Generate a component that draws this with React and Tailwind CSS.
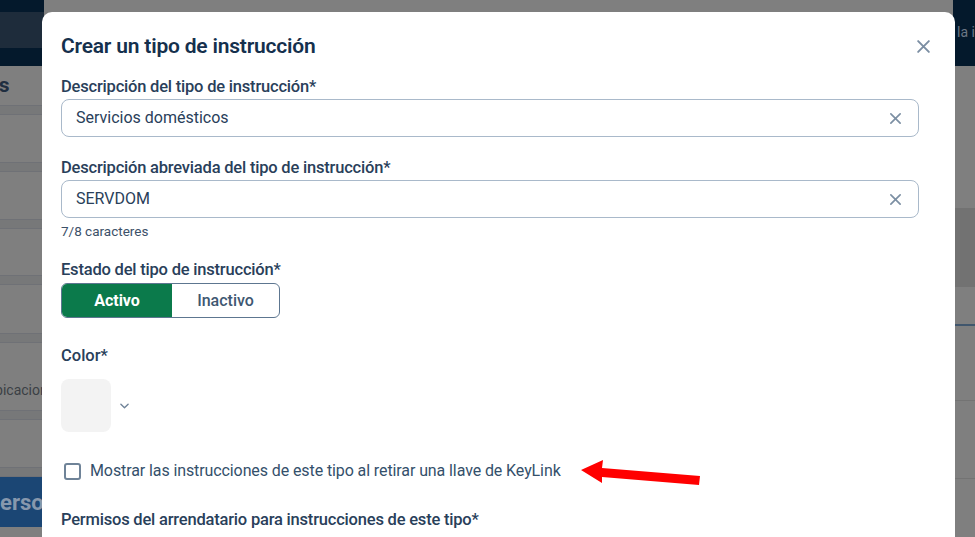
import React from 'react';

const font = { fontFamily: 'Roboto, "Liberation Sans", sans-serif' };

function XIcon({ className }) {
  return (
    <svg viewBox="0 0 14 14" className={className} fill="none" stroke="currentColor" strokeWidth="1.8" strokeLinecap="round">
      <path d="M2 2l10 10M12 2L2 12" />
    </svg>
  );
}

function Band() {
  return <div className="h-[10px] bg-[#777879] border-y border-[#6f7176]"></div>;
}

function TextField({ value }) {
  return (
    <div className="h-[38px] w-[858px] rounded-[8px] border-[1.5px] border-[#a9b9ca] flex items-center justify-between pl-[14px] pr-[16px]">
      <span className="text-[16px] text-[#29405a]">{value}</span>
      <XIcon className="w-[13px] h-[13px] text-[#7c8fa3]" />
    </div>
  );
}

export default function App() {
  return (
    <div className="relative w-[975px] h-[537px] overflow-hidden bg-[#7f7f7f]" style={font}>
      {/* page behind the dialog */}
      <div className="flex justify-between">
        <div className="w-[44px] flex flex-col overflow-hidden">
          <div className="h-[12px] bg-[#04192c]"></div>
          <div className="h-[36px] bg-[#1e2c3b]"></div>
          <div className="h-[18px] bg-[#04192c]"></div>
          <div className="h-[39px] flex items-center text-[21px] font-bold text-[#1f2e40] whitespace-nowrap ml-[-13px]">os</div>
          <Band />
          <div className="h-[47px]"></div>
          <Band />
          <div className="h-[47px]"></div>
          <Band />
          <div className="h-[46px]"></div>
          <Band />
          <div className="h-[48px]"></div>
          <Band />
          <div className="h-[67px] flex items-center text-[14px] text-[#3b3f45] whitespace-nowrap ml-[-14px] pt-[27px]">Ubicacion</div>
          <Band />
          <div className="h-[47px]"></div>
          <Band />
          <div className="h-[50px] bg-[#1b4674] flex items-center text-[22px] font-bold text-[#8798ad] whitespace-nowrap ml-[-14px]">Person</div>
        </div>
        <div className="w-[22px] flex flex-col overflow-hidden">
          <div className="h-[66px] bg-[#04192c] flex items-center whitespace-nowrap text-[14px] text-[#6c7784] pl-[4px] pb-[2px]">la in</div>
          <div className="h-[142px]"></div>
          <div className="h-[79px] bg-[#727272]"></div>
          <div className="h-[37px]"></div>
          <div className="h-[2px] bg-[#40566d]"></div>
          <div className="h-[74px]"></div>
          <div className="h-px bg-[#737373]"></div>
          <div className="h-[77px]"></div>
          <div className="h-px bg-[#737373]"></div>
        </div>
      </div>

      {/* dialog */}
      <div className="absolute left-[42px] top-[12px] w-[913px] h-[560px] bg-white rounded-t-[10px] pl-[19px] pt-[22px]">
        <div className="flex items-center justify-between pr-[24px]">
          <h2 className="text-[21px] leading-[24px] font-semibold text-[#15304d] tracking-[-0.2px]">Crear un tipo de instrucción</h2>
          <XIcon className="w-[15px] h-[15px] text-[#7b8ea3]" />
        </div>

        <div className="mt-[19px] text-[16.5px] leading-[20px] font-medium text-[#29405a] tracking-[-0.2px]">Descripción del tipo de instrucción*</div>
        <div className="mt-[2px]"><TextField value="Servicios domésticos" /></div>

        <div className="mt-[21px] text-[16.5px] leading-[20px] font-medium text-[#29405a] tracking-[-0.2px]">Descripción abreviada del tipo de instrucción*</div>
        <div className="mt-[2px]"><TextField value="SERVDOM" /></div>
        <div className="mt-[6px] text-[13.5px] leading-[14px] text-[#3c5169]">7/8 caracteres</div>

        <div className="mt-[22px] text-[16.5px] leading-[20px] font-medium text-[#29405a] tracking-[-0.2px]">Estado del tipo de instrucción*</div>
        <div className="mt-[3px] flex w-[219px] h-[35px] rounded-[6px] border-[1.5px] border-[#5d7690] overflow-hidden">
          <div className="w-[110px] bg-[#0b7a4b] flex items-center justify-center text-[16px] font-bold text-white">Activo</div>
          <div className="flex-1 flex items-center justify-center text-[16px] font-medium text-[#3f5872]">Inactivo</div>
        </div>

        <div className="mt-[28px] text-[16.5px] leading-[20px] font-medium text-[#29405a]">Color*</div>
        <div className="mt-[13px] flex items-center gap-[9px]">
          <div className="w-[50px] h-[53px] rounded-[8px] bg-[#f3f3f3]"></div>
          <svg viewBox="0 0 10 6" className="w-[9px] h-[6px] text-[#6f8398]" fill="none" stroke="currentColor" strokeWidth="1.5" strokeLinecap="round" strokeLinejoin="round">
            <path d="M1 1l4 4 4-4" />
          </svg>
        </div>

        <div className="mt-[30px] flex items-center gap-[9px] pl-[3px] h-[18px]">
          <div className="w-[17px] h-[17px] rounded-[3px] border-2 border-[#6f8398]"></div>
          <span className="text-[16px] tracking-[-0.1px] text-[#34506b]">Mostrar las instrucciones de este tipo al retirar una llave de KeyLink</span>
        </div>

        <div className="mt-[30px] text-[16.5px] leading-[20px] font-medium text-[#29405a] tracking-[-0.2px]">Permisos del arrendatario para instrucciones de este tipo*</div>
      </div>

      {/* red annotation arrow */}
      <svg className="absolute left-[578px] top-[455px] w-[126px] h-[35px]" viewBox="0 0 126 35">
        <polygon points="3,15 25,5 24,13 122,21 121,30 24,22 24,28" fill="#ff0000" />
      </svg>
    </div>
  );
}
